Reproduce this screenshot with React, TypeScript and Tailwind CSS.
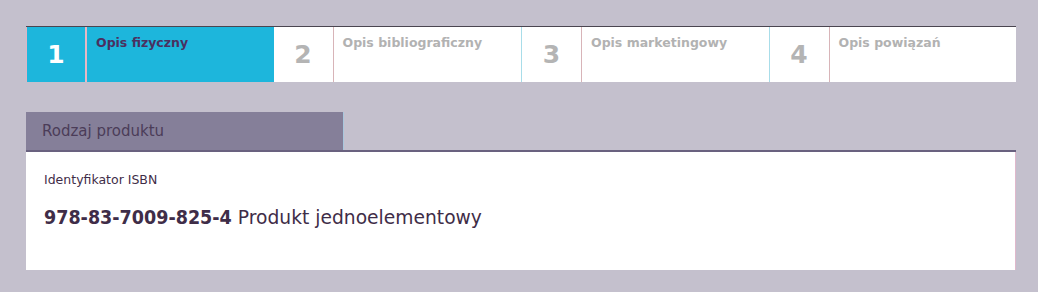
import React from "react";

const steps = [
  { n: "1", label: "Opis fizyczny", active: true },
  { n: "2", label: "Opis bibliograficzny", active: false },
  { n: "3", label: "Opis marketingowy", active: false },
  { n: "4", label: "Opis powiązań", active: false },
];

const sans = { fontFamily: '"DejaVu Sans", sans-serif' };
const cond = { fontFamily: '"DejaVu Sans Condensed", "DejaVu Sans", sans-serif' };

export default function App() {
  return (
    <div className="w-[1038px] h-[292px] bg-[#c4c0cd] pt-[26px] px-[26px] overflow-hidden" style={sans}>
      <div className="w-[990px]">
        <div className="grid grid-cols-4 border-t border-[#4a4550] h-[56px]">
          {steps.map((s, i) => (
            <div
              key={s.n}
              className={
                "flex h-[55px] " +
                (s.active ? "bg-[#1db6dc] " : "bg-white ") +
                (i >= 2 ? "border-l border-[#a8dde9] " : "") +
                (i === 0 ? "border-l border-[#dcb6c4]" : "")
              }
            >
              <div
                className={
                  "w-[60px] shrink-0 flex items-center justify-center border-r font-bold text-[25px] " +
                  (s.active
                    ? "text-white border-[#e8b8c4] border-r-2"
                    : "text-[#b4b4b4] border-[#d8b4b8]")
                }
              >
                {s.n}
              </div>
              <div
                className={
                  "pl-[9px] pt-[8px] text-[12.5px] font-bold leading-[16px] " +
                  (s.active ? "text-[#4a3060]" : "text-[#b2b2b2]")
                }
              >
                {s.label}
              </div>
            </div>
          ))}
        </div>

        <div className="mt-[30px]">
          <div className="w-[318px] h-[38px] bg-[#857f99] flex items-center pl-[16px] text-[15px] text-[#4b3c58] border-r border-[#a9c7dd]">
            Rodzaj produktu
          </div>
          <div className="h-[2px] bg-[#69617f]" />
          <div className="bg-white h-[118px] pl-[18px] pt-[20px] text-[#3f2d48] border-r border-[#e0b8cc]">
            <div className="text-[12.5px] leading-[16px]">Identyfikator ISBN</div>
            <div className="mt-[18px] text-[19.5px] leading-[24px] flex items-baseline">
              <span className="font-bold" style={cond}>978-83-7009-825-4</span>
              <span className="ml-[6px] text-[18.7px]">Produkt jednoelementowy</span>
            </div>
          </div>
        </div>
      </div>
    </div>
  );
}
